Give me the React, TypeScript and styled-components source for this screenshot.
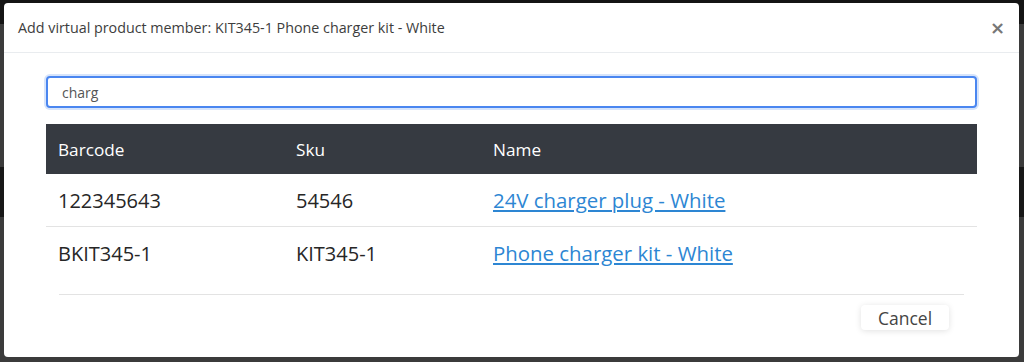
import React from 'react';
import styled, { createGlobalStyle } from 'styled-components';

const GlobalStyle = createGlobalStyle`
  html, body {
    margin: 0;
    padding: 0;
    background: #3a3a3a;
    font-family: "Open Sans", "Noto Sans", sans-serif;
  }
`;

type Member = {
  barcode: string;
  sku: string;
  name: string;
};

const members: Member[] = [
  { barcode: '122345643', sku: '54546', name: '24V charger plug - White' },
  { barcode: 'BKIT345-1', sku: 'KIT345-1', name: 'Phone charger kit - White' },
];

export default function App() {
  return (
    <>
      <GlobalStyle />
      <SBackdrop>
        <SModal>
          <SHeader>
            <STitle>Add virtual product member: KIT345-1 Phone charger kit - White</STitle>
            <SClose aria-label="Close">×</SClose>
          </SHeader>
          <SBody>
            <SSearch defaultValue="charg" />
            <STable>
              <colgroup>
                <col style={{ width: 238 }} />
                <col style={{ width: 197 }} />
                <col />
              </colgroup>
              <thead>
                <tr>
                  <STh>Barcode</STh>
                  <STh>Sku</STh>
                  <STh>Name</STh>
                </tr>
              </thead>
              <tbody>
                {members.map((m) => (
                  <STr key={m.barcode}>
                    <STd>{m.barcode}</STd>
                    <STd>{m.sku}</STd>
                    <STd>
                      <SLink href="#">{m.name}</SLink>
                    </STd>
                  </STr>
                ))}
              </tbody>
            </STable>
            <SFooter>
              <SCancel>Cancel</SCancel>
            </SFooter>
          </SBody>
        </SModal>
      </SBackdrop>
    </>
  );
}

const SBackdrop = styled.div`
  width: 1024px;
  height: 362px;
  box-sizing: border-box;
  padding: 3px 5px 5px 4px;
  background: linear-gradient(
    to bottom,
    #141414 0px,
    #141414 24px,
    #3b3b3b 24px,
    #3b3b3b 167px,
    #181818 167px,
    #181818 217px,
    #3b3b3b 217px
  );
`;

const SModal = styled.div`
  height: 100%;
  background: #fff;
  border-radius: 4px;
  display: flex;
  flex-direction: column;
  overflow: hidden;
`;

const SHeader = styled.div`
  height: 50px;
  box-sizing: border-box;
  display: flex;
  align-items: center;
  justify-content: space-between;
  padding: 0 14px 0 14px;
  border-bottom: 1px solid #e9ecef;
`;

const STitle = styled.h5`
  margin: 0;
  font-size: 14.3px;
  font-weight: 400;
  color: #3d3d3d;
`;

const SClose = styled.button`
  border: none;
  background: none;
  padding: 0;
  font-family: "DejaVu Sans", sans-serif;
  font-size: 18px;
  font-weight: 700;
  color: #777;
  line-height: 1;
  cursor: pointer;
`;

const SBody = styled.div`
  flex: 1;
  display: flex;
  flex-direction: column;
  padding: 23px 42px 0 42px;
`;

const SSearch = styled.input`
  height: 32px;
  box-sizing: border-box;
  border: 2px solid #4a86f0;
  border-radius: 4px;
  box-shadow: 0 0 0 2px #d6e4fb;
  padding: 0 14px;
  font-family: "Open Sans", sans-serif;
  font-size: 14px;
  color: #555;
  outline: none;
`;

const STable = styled.table`
  margin-top: 16px;
  width: 100%;
  border-collapse: collapse;
  table-layout: fixed;
`;

const STh = styled.th`
  height: 50px;
  background: #363a41;
  color: #fff;
  font-size: 17.2px;
  font-weight: 400;
  text-align: left;
  padding: 0 12px;
`;

const STr = styled.tr`
  & + & {
    border-top: 1px solid #e3e3e3;
  }
`;

const STd = styled.td`
  height: 52px;
  padding: 0 12px;
  font-size: 20px;
  color: #262626;
`;

const SLink = styled.a`
  color: #2d86d3;
  text-decoration: underline;
  font-size: 20.4px;
`;

const SFooter = styled.div`
  margin: 15px 13px 0 13px;
  border-top: 1px solid #e3e3e3;
  display: flex;
  justify-content: flex-end;
  padding: 10px 15px 0 0;
`;

const SCancel = styled.button`
  width: 88px;
  height: 25px;
  border: none;
  border-radius: 4px;
  background: #fff;
  box-shadow: 0 1px 6px rgba(0, 0, 0, 0.12);
  font-family: "Open Sans", sans-serif;
  font-size: 17.5px;
  color: #444;
  padding: 0;
  cursor: pointer;
`;
